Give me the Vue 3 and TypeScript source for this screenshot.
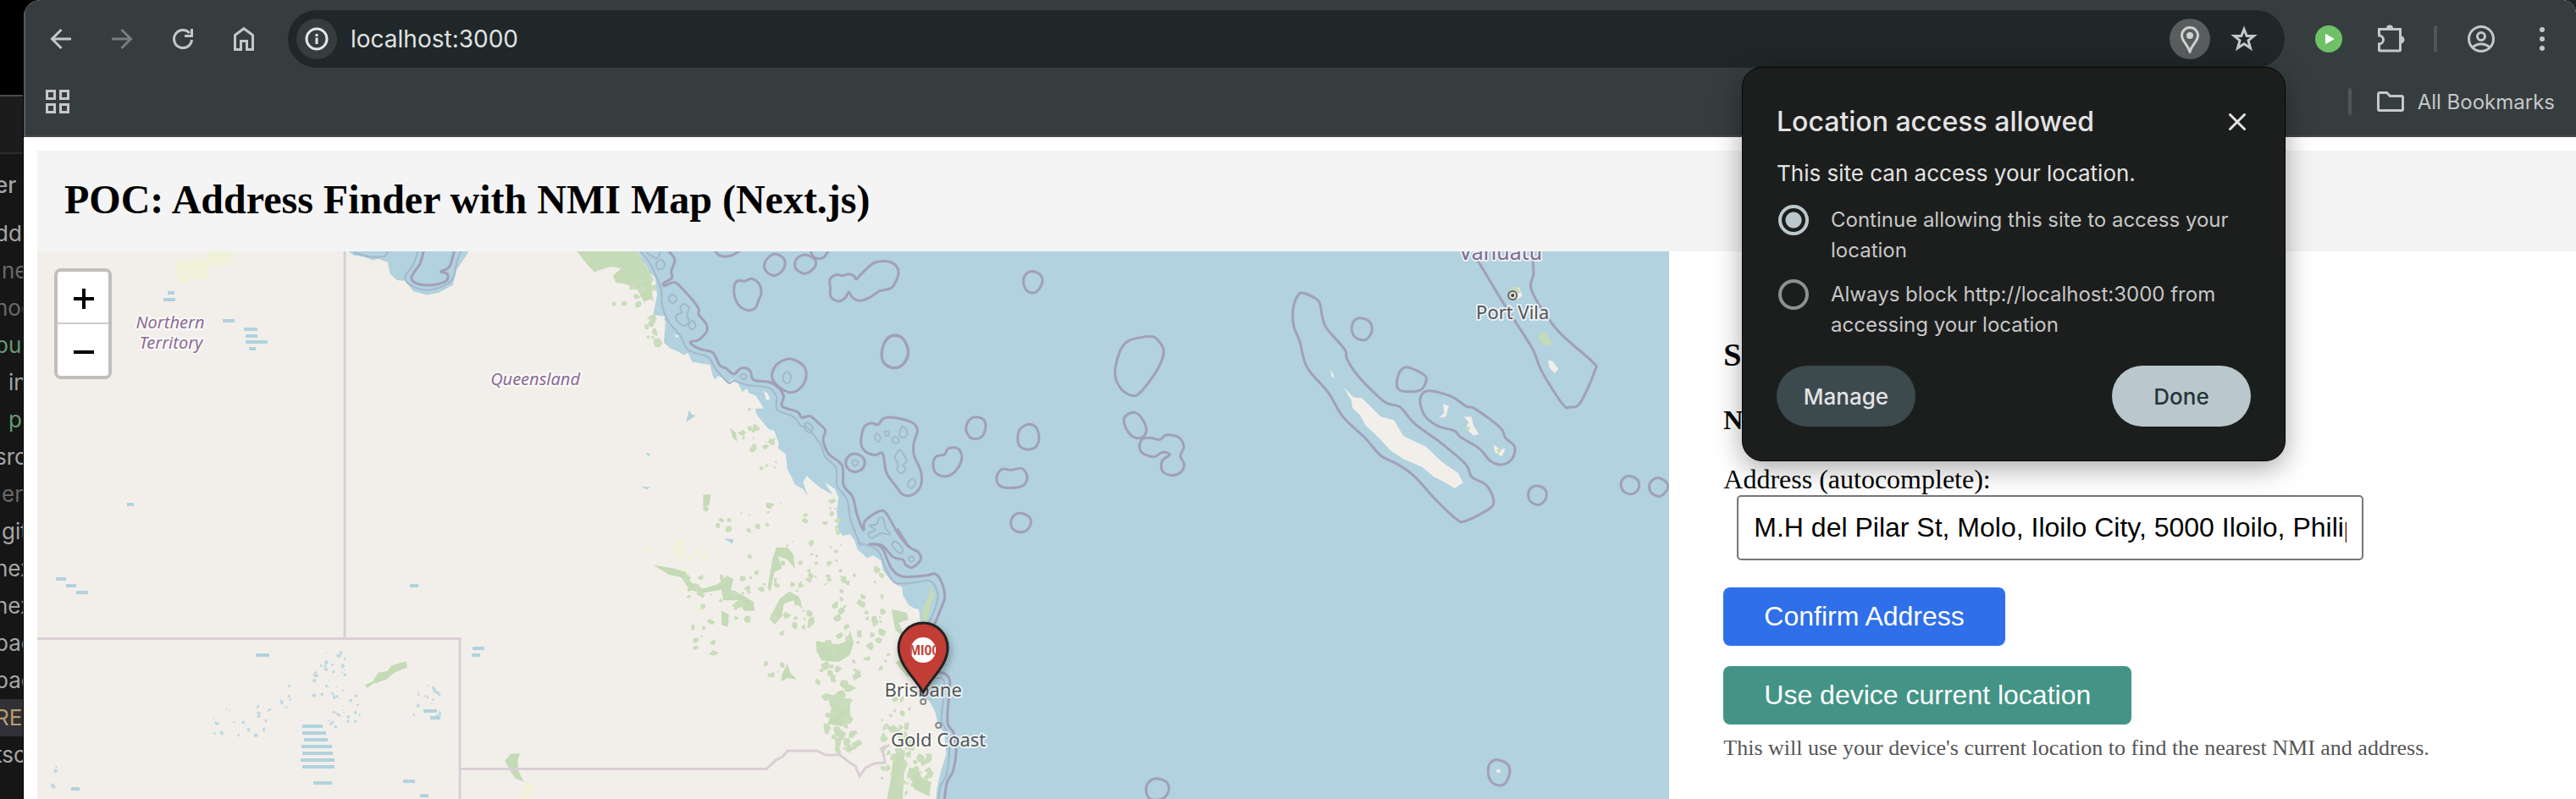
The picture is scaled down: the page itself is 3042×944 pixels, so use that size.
<script setup lang="ts">
import { ref } from 'vue'

type Point = [number, number]

interface TreeRow {
  name: string
  tone: string
}

const address = ref('M.H del Pilar St, Molo, Iloilo City, 5000 Iloilo, Philippines')
const permission = ref('allow')

const treeRows: TreeRow[] = [
  { name: 'ddr', tone: 'plain flush' },
  { name: 'ne', tone: 'faded' },
  { name: 'noc', tone: 'faded flush' },
  { name: 'pub', tone: 'added flush' },
  { name: 'in', tone: 'plain nested' },
  { name: 'p', tone: 'added nested' },
  { name: 'src', tone: 'plain flush' },
  { name: 'en', tone: 'faded' },
  { name: 'git', tone: 'plain' },
  { name: 'nex', tone: 'plain flush' },
  { name: 'nex', tone: 'plain flush' },
  { name: 'pac', tone: 'plain flush' },
  { name: 'pac', tone: 'plain flush' },
  { name: 'RE', tone: 'changed flush' },
  { name: 'tsc', tone: 'plain flush' },
]

/* Each map sheet keeps its own grid; these place its points on the shared canvas. */
const sheet = (x0: number, y0: number, sx: number, sy: number) => (list: number[]): Point[] => {
  const out: Point[] = []
  for (let i = 0; i < list.length; i += 2) {
    out.push([Math.round((x0 + list[i] * sx) * 10) / 10, Math.round((y0 + list[i + 1] * sy) * 10) / 10])
  }
  return out
}
const west = sheet(0, 290, 0.6378, 0.4171)
const coast = sheet(700, 290, 0.4464, 0.4171)
const islands = sheet(1300, 290, 0.4464, 0.4171)
const reef = sheet(750, 290, 0.3333, 0.3333)

const line = (pts: Point[], closed = false): string => 'M' + pts.map((p) => p.join(' ')).join('L') + (closed ? 'Z' : '')

const curve = (pts: Point[], closed = true): string => {
  const n = pts.length
  const at = (i: number): Point => (closed ? pts[(i + n) % n] : pts[Math.max(0, Math.min(n - 1, i))])
  let d = `M${pts[0][0]} ${pts[0][1]}`
  const last = closed ? n : n - 1
  for (let i = 0; i < last; i++) {
    const [a, b, c, e] = [at(i - 1), at(i), at(i + 1), at(i + 2)]
    const c1 = [b[0] + (c[0] - a[0]) / 6, b[1] + (c[1] - a[1]) / 6].map((v) => v.toFixed(1))
    const c2 = [c[0] - (e[0] - b[0]) / 6, c[1] - (e[1] - b[1]) / 6].map((v) => v.toFixed(1))
    d += `C${c1.join(' ')} ${c2.join(' ')} ${c[0]} ${c[1]}`
  }
  return closed ? d + 'Z' : d
}

const sea = line(coast([
  120, 17, 128, 40, 140, 55, 152, 78, 165, 92, 170, 140, 166, 160, 160, 195, 180, 200, 192, 215, 188, 275, 205, 292, 225, 300,
  240, 310, 252, 305, 262, 330, 285, 334, 310, 338, 318, 372, 325, 380, 330, 370, 345, 375, 358, 392, 368, 378, 385, 392, 395, 415,
  408, 405, 412, 418, 430, 425, 440, 440, 452, 462, 430, 462, 432, 475, 445, 495, 465, 520, 480, 525, 492, 560, 490, 575, 510, 590,
  515, 635, 525, 655, 535, 678, 556, 690, 568, 710, 556, 670, 566, 652, 578, 665, 600, 685, 635, 706, 612, 670, 640, 690, 650, 714,
  645, 750, 650, 810, 662, 822, 680, 818, 692, 835, 700, 862, 712, 872, 725, 885, 742, 878, 762, 892, 768, 920, 785, 945, 800, 960,
  818, 968, 820, 990, 835, 1018, 850, 1028, 862, 1030, 866, 1060, 862, 1100, 880, 1180, 892, 1215, 880, 1250, 870, 1275, 890, 1290,
  905, 1320, 912, 1350, 930, 1385, 935, 1440, 920, 1490, 910, 1540, 908, 1568, 2850, 1568, 2850, 17,
]), true)

const gulf = line(west([
  645, 17, 655, 28, 672, 32, 690, 42, 700, 38, 718, 48, 722, 80, 735, 98, 750, 100, 756, 112, 765, 130, 790, 140, 812, 134, 838, 112,
  845, 70, 858, 40, 868, 17,
]), true)

const maritime: string[] = [
  curve(reef([
    120, 22, 140, 50, 128, 90, 130, 115, 102, 133, 104, 143, 130, 132, 150, 136, 200, 190, 225, 225, 225, 245, 250, 275, 255, 300, 240, 322,
    222, 336, 195, 342, 208, 356, 240, 370, 275, 380, 300, 425, 322, 436, 345, 455, 355, 453, 370, 438, 390, 434, 408, 446, 415, 472,
    432, 480, 480, 486, 512, 508, 526, 535, 521, 570, 575, 590, 590, 610, 620, 605, 650, 630, 673, 655, 666, 690, 685, 738, 733, 780,
    738, 850, 770, 890, 785, 950, 808, 1008, 815, 975, 865, 942, 890, 950, 930, 1020, 968, 1068,
  ]), false),
  curve(coast([805, 802, 836, 853, 860, 868, 867, 890, 845, 912, 828, 905, 820, 890, 795, 883, 765, 850, 732, 846, 752, 848, 768, 862, 790, 915,
    820, 938, 880, 935, 905, 930, 921, 950, 931, 993, 922, 1025, 903, 1075]), false),
  curve(coast([900, 1212, 925, 1210, 943, 1228, 943, 1258, 938, 1350, 954, 1380, 961, 1430, 953, 1488, 937, 1520, 930, 1568]), false),
  curve(west([785, 10, 778, 50, 762, 90, 772, 108, 800, 112, 826, 100, 828, 80, 816, 74, 832, 60, 842, 10]), false),
  curve(reef([280, 15, 300, 36, 340, 36, 372, 18]), false),
  curve(reef([620, 15, 634, 42, 665, 44, 684, 20]), false),
  curve(reef([492, 30, 525, 45, 530, 72, 510, 100, 485, 106, 460, 85, 462, 55])),
  curve(reef([598, 33, 632, 45, 640, 68, 620, 92, 595, 99, 568, 80, 570, 50])),
  curve(reef([365, 125, 390, 126, 412, 118, 438, 135, 447, 165, 437, 195, 425, 222, 402, 230, 370, 215, 352, 180, 351, 142])),
  curve(reef([690, 120, 712, 104, 735, 107, 758, 101, 775, 108, 783, 120, 800, 102, 850, 60, 908, 60, 933, 95, 910, 148, 865, 162, 830, 185,
    795, 196, 770, 185, 757, 165, 745, 185, 720, 198, 693, 182, 691, 150])),
  curve(reef([918, 318, 950, 332, 968, 380, 950, 420, 915, 434, 882, 417, 873, 382, 888, 338])),
  curve(reef([552, 402, 595, 425, 606, 460, 590, 500, 552, 521, 510, 502, 485, 470, 492, 435, 515, 412])),
  curve(reef([860, 635, 880, 613, 915, 610, 980, 627, 1000, 655, 987, 700, 988, 745, 1012, 800, 1012, 850, 985, 882, 950, 884, 925, 855,
    890, 805, 877, 738, 850, 743, 815, 730, 800, 700, 810, 645, 835, 630])),
  curve(reef([779, 738, 805, 750, 813, 770, 803, 793, 779, 803, 755, 792, 746, 770, 755, 748])),
  curve(coast([900, 620, 908, 598, 930, 592, 940, 575, 965, 575, 976, 600, 962, 635, 935, 654, 908, 645])),
  curve(coast([1013, 486, 1035, 495, 1038, 520, 1025, 545, 1000, 545, 987, 522, 995, 495])),
  curve(coast([1150, 507, 1172, 515, 1180, 545, 1170, 572, 1145, 577, 1126, 562, 1127, 525])),
  curve(coast([1082, 634, 1105, 636, 1135, 632, 1149, 655, 1138, 680, 1102, 687, 1075, 680, 1068, 655])),
  curve(coast([1132, 758, 1155, 770, 1157, 792, 1142, 810, 1118, 809, 1106, 790, 1112, 767])),
  curve(coast([1163, 73, 1185, 85, 1188, 108, 1172, 132, 1150, 130, 1139, 105, 1145, 82])),
  curve(coast([797, 255, 822, 266, 834, 300, 822, 335, 797, 347, 770, 332, 765, 300, 776, 266])),
  curve(islands([75, 269, 130, 258, 150, 268, 166, 300, 150, 350, 105, 415, 82, 425, 52, 405, 37, 362, 50, 300])),
  curve(islands([85, 473, 105, 485, 120, 520, 110, 543, 85, 542, 65, 515, 62, 487])),
  curve(islands([110, 548, 130, 545, 155, 550, 172, 537, 205, 543, 219, 570, 210, 596, 220, 620, 210, 643, 185, 651, 162, 638, 162, 610, 182, 592,
    162, 586, 140, 599, 110, 588, 102, 568])),
  curve(islands([535, 135, 575, 157, 585, 200, 597, 235, 645, 295, 650, 320, 680, 370, 750, 443, 790, 457, 830, 505, 900, 560, 965, 620, 980, 655,
    1020, 680, 1038, 720, 1028, 745, 965, 780, 940, 775, 885, 720, 830, 655, 785, 620, 740, 595, 700, 547, 640, 485, 600, 415, 545, 345, 525, 270,
    510, 230, 508, 180, 520, 143])),
  curve(islands([690, 206, 712, 218, 716, 245, 700, 267, 675, 262, 663, 238, 670, 212])),
  curve(islands([812, 345, 858, 370, 856, 395, 840, 412, 795, 412, 782, 395, 790, 358])),
  curve(islands([865, 412, 925, 427, 965, 455, 990, 463, 1055, 515, 1070, 545, 1094, 570, 1087, 605, 1060, 621, 1030, 610, 1000, 575, 950, 542,
    935, 525, 890, 511, 855, 480, 844, 435])),
  curve(islands([995, 40, 1068, 170, 1140, 290, 1165, 355, 1220, 448, 1240, 458, 1268, 445, 1306, 355, 1300, 330, 1205, 237, 1140, 130, 1144, 80, 1142, 35]), false),
  curve(islands([1154, 681, 1175, 692, 1177, 716, 1160, 734, 1138, 727, 1130, 705, 1138, 686])),
  curve(islands([1399, 653, 1420, 665, 1422, 688, 1405, 704, 1383, 697, 1375, 675, 1383, 658])),
  curve(islands([1474, 658, 1495, 670, 1498, 690, 1480, 710, 1458, 703, 1450, 683, 1458, 665])),
  curve(islands([1048, 1457, 1074, 1468, 1081, 1492, 1070, 1522, 1050, 1529, 1030, 1515, 1024, 1488, 1030, 1465])),
  curve(islands([150, 1510, 175, 1522, 178, 1548, 160, 1568, 130, 1568, 119, 1542, 128, 1518])),
]

const inshore: string[] = [
  curve(reef([20, 22, 50, 60, 75, 110, 92, 155, 96, 215, 118, 270, 160, 320, 190, 372, 258, 395, 285, 437, 330, 487, 350, 480, 400, 495, 470, 503,
    500, 535, 503, 582, 560, 607, 588, 640, 610, 645, 658, 708, 672, 748, 712, 790, 715, 852, 750, 900, 765, 980, 800, 1065]), false),
  curve(coast([700, 842, 752, 862, 775, 915, 800, 955, 850, 955, 892, 950, 912, 985, 908, 1020, 888, 1072]), false),
  curve(coast([905, 1225, 928, 1232, 926, 1290, 922, 1345, 938, 1380, 943, 1430, 935, 1500, 920, 1530, 914, 1568]), false),
  curve(west([775, 10, 765, 55, 750, 88, 758, 110, 785, 126, 815, 118, 838, 95, 846, 45, 855, 10]), false),
  curve(west([655, 20, 685, 32, 712, 30, 718, 12]), false),
  curve(reef([40, 25, 75, 45, 90, 22]), false),
  curve(reef([88, 50, 104, 62, 100, 80, 82, 84, 74, 66])),
  curve(reef([134, 175, 148, 188, 138, 203, 121, 197, 122, 180])),
  curve(reef([175, 208, 191, 222, 184, 245, 190, 272, 172, 284, 147, 265, 148, 245, 165, 238, 160, 218])),
  curve(reef([203, 267, 214, 283, 204, 298, 188, 284])),
  curve(reef([384, 455, 395, 464, 384, 475, 373, 464])),
  curve(reef([537, 448, 552, 463, 545, 487, 528, 483, 524, 463])),
  curve(reef([612, 628, 629, 645, 620, 664, 602, 652, 602, 633])),
  curve(reef([779, 760, 790, 770, 779, 782, 768, 770])),
  curve(reef([855, 666, 869, 680, 862, 697, 849, 683])),
  line(reef([885, 659, 899, 661, 898, 674, 885, 673]), true),
  curve(reef([946, 641, 963, 660, 955, 680, 937, 673])),
  curve(reef([921, 677, 935, 690, 924, 702, 909, 690])),
  curve(reef([937, 724, 950, 740, 962, 765, 948, 780, 958, 790, 943, 808, 927, 793, 932, 775, 920, 750])),
  curve(reef([982, 826, 993, 843, 978, 860, 964, 846])),
  curve(reef([865, 965, 880, 970, 886, 1000, 903, 1025, 870, 1020, 840, 1037, 825, 1022, 850, 1008, 830, 992, 856, 988])),
  curve(coast([800, 838, 820, 860, 812, 872, 792, 850])),
  curve(coast([843, 880, 850, 888, 843, 896, 835, 888])),
]

const reefLand = [
  line(islands([640, 400, 668, 430, 690, 432, 740, 485, 775, 495, 800, 540, 860, 570, 900, 612, 945, 645, 958, 672, 935, 688, 905, 668, 880, 655,
    850, 628, 800, 605, 765, 580, 735, 545, 700, 510, 685, 480, 665, 460, 662, 438]), true),
  line(islands([606, 350, 615, 365, 618, 378, 610, 370]), true),
  line(islands([960, 485, 980, 485, 985, 510, 1000, 535, 985, 538, 965, 518, 972, 500]), true),
  line(islands([1038, 563, 1055, 578, 1070, 575, 1060, 598, 1042, 585]), true),
  line(islands([905, 448, 920, 455, 912, 485, 893, 488, 908, 475]), true),
  line(islands([1183, 325, 1195, 328, 1210, 350, 1200, 362, 1185, 345]), true),
  line(islands([1085, 125, 1105, 118, 1115, 142, 1102, 152, 1090, 145]), true),
  line(islands([1046, 1484, 1056, 1484, 1056, 1493, 1046, 1493]), true),
  line(reef([75, 250, 105, 250, 100, 280, 86, 268]), true),
  line(reef([455, 515, 470, 525, 478, 545, 465, 548]), true),
  line(reef([138, 316, 156, 320, 148, 328]), true),
]

const woods = [
  line(west([1068, 17, 1180, 17, 1192, 50, 1205, 80, 1208, 150, 1192, 160, 1180, 125, 1160, 110, 1140, 105, 1135, 85, 1150, 65, 1130, 60, 1100, 75, 1085, 50]), true),
  line(coast([160, 905, 215, 915, 245, 925, 260, 955, 290, 972, 330, 960, 355, 935, 372, 945, 365, 975, 395, 990, 425, 1010, 428, 1035, 400, 1035, 385, 1005,
    345, 1005, 340, 975, 290, 985, 255, 975, 235, 940, 200, 932]), true),
  line(coast([485, 855, 515, 855, 530, 875, 535, 915, 515, 890, 490, 880, 500, 915, 480, 925, 470, 980, 462, 970, 475, 890]), true),
  line(coast([495, 1000, 520, 980, 545, 995, 555, 1030, 530, 1005, 505, 1015, 500, 1050, 480, 1075, 470, 1050]), true),
  line(coast([590, 1120, 615, 1125, 650, 1130, 672, 1120, 680, 1090, 690, 1125, 680, 1160, 650, 1180, 605, 1175, 592, 1150]), true),
  line(coast([340, 1035, 360, 1045, 358, 1080, 340, 1075]), true),
  line(coast([500, 1215, 515, 1185, 522, 1210, 540, 1230, 515, 1225, 498, 1235]), true),
  line(coast([625, 1290, 655, 1280, 680, 1300, 680, 1340, 660, 1362, 620, 1355, 635, 1320]), true),
  line(coast([795, 1440, 825, 1430, 820, 1568, 778, 1568, 790, 1500]), true),
  line(coast([835, 1480, 860, 1480, 870, 1510, 895, 1520, 890, 1560, 850, 1540]), true),
  line(coast([790, 1030, 830, 1040, 835, 1060, 810, 1068, 825, 1110, 800, 1090]), true),
  line(coast([800, 1180, 820, 1170, 850, 1225, 830, 1220]), true),
  line(coast([893, 960, 903, 990, 892, 1030, 883, 1070, 868, 1070, 875, 1020, 890, 990]), true),
  line(coast([362, 515, 378, 530, 382, 556, 370, 545]), true),
  line(coast([292, 705, 312, 705, 308, 735, 292, 740]), true),
  line(coast([458, 728, 480, 732, 470, 746, 458, 742]), true),
  line(west([675, 1245, 690, 1235, 700, 1210, 718, 1205, 725, 1190, 752, 1178, 754, 1195, 730, 1210, 715, 1230, 690, 1242, 680, 1254]), true),
  line(west([935, 1460, 945, 1440, 962, 1438, 958, 1460, 960, 1490, 970, 1520, 955, 1510, 945, 1490]), true),
  line(islands([1158, 248, 1172, 245, 1186, 265, 1194, 283, 1180, 284, 1158, 268]), true),
  line(islands([1080, 120, 1098, 115, 1110, 132, 1095, 140]), true),
  line(islands([1045, 577, 1062, 576, 1052, 590]), true),
  line(islands([960, 513, 978, 515, 972, 524]), true),
]

const lakes = [
  line(west([1270, 500, 1276, 465, 1280, 478, 1288, 482, 1278, 492]), true),
  line(west([1196, 587, 1204, 590, 1200, 598]), true),
  line(west([1340, 830, 1358, 832, 1356, 845, 1348, 838]), true),
  line(west([1186, 684, 1204, 684, 1198, 691]), true),
]

/* Repeatable scatter of small patches for scrub and salt pans. */
let seed = 7
const rand = (): number => {
  seed = (seed * 16807) % 2147483647
  return seed / 2147483647
}
const scatter = (x: number, y: number, w: number, h: number, count: number, size: number): string => {
  let d = ''
  for (let i = 0; i < count; i++) {
    const cx = x + rand() * w
    const cy = y + rand() * h
    const r = size * (0.4 + rand())
    const corners: Point[] = []
    for (let k = 0; k < 6; k++) {
      const a = (k / 6) * Math.PI * 2
      const q = r * (0.5 + rand() * 0.8)
      corners.push([Math.round((cx + Math.cos(a) * q) * 10) / 10, Math.round((cy + Math.sin(a) * q) * 10) / 10])
    }
    d += line(corners, true)
  }
  return d
}
const scrub = [
  scatter(725, 326, 50, 36, 12, 4),
  scatter(763, 376, 14, 34, 10, 4),
  scatter(874, 480, 26, 40, 10, 3),
  scatter(884, 518, 34, 40, 10, 3),
  scatter(820, 590, 160, 40, 18, 3),
  scatter(880, 640, 120, 60, 34, 3),
  scatter(810, 680, 80, 60, 24, 4),
  scatter(970, 660, 80, 140, 50, 4),
  scatter(900, 700, 60, 50, 14, 4),
  scatter(815, 740, 30, 36, 8, 3),
  scatter(960, 790, 60, 30, 12, 4),
  scatter(975, 810, 32, 60, 26, 5),
  scatter(985, 860, 28, 40, 22, 4),
  scatter(1040, 820, 40, 110, 44, 4),
  scatter(1070, 890, 32, 50, 18, 4),
  scatter(900, 780, 30, 24, 6, 3),
  scatter(980, 590, 14, 40, 8, 3),
]
const pans = [
  scatter(370, 770, 40, 60, 34, 2),
  scatter(250, 835, 70, 34, 22, 2),
  scatter(380, 820, 45, 40, 20, 2),
  scatter(488, 810, 34, 36, 16, 2),
  scatter(330, 800, 14, 44, 8, 2),
  scatter(50, 905, 40, 24, 4, 3),
]
const meadows = [
  line(west([322, 42, 380, 38, 384, 18, 430, 17, 430, 55, 388, 58, 382, 92, 352, 95, 348, 108, 330, 105]), true),
  line(west([965, 1540, 975, 1520, 990, 1525, 985, 1550, 970, 1568, 964, 1568]), true),
  line(coast([220, 840, 235, 835, 240, 870, 225, 895, 218, 865]), true),
  line(coast([140, 852, 160, 860, 150, 880]), true),
  line(coast([912, 1290, 924, 1290, 920, 1320, 914, 1318]), true),
  line(coast([268, 1010, 292, 1020, 290, 1042, 275, 1035]), true),
  line(islands([998, 700, 1010, 710, 1003, 720]), true),
  line(islands([1234, 420, 1248, 420, 1250, 432, 1238, 434]), true),
  scatter(795, 640, 40, 60, 16, 3),
]

const dashes: number[][] = [
  [357, 858, 24], [357, 866, 28], [359, 874, 28], [356, 882, 36], [357, 890, 36], [355, 898, 40], [357, 906, 38], [370, 925, 22],
  [193, 354, 14], [198, 346, 8], [263, 379, 14], [288, 389, 16], [290, 397, 14], [290, 404, 26], [294, 412, 8],
  [558, 766, 14], [557, 774, 10], [302, 774, 16], [66, 684, 12], [78, 692, 12], [90, 700, 14], [484, 692, 10], [476, 923, 14],
  [496, 940, 10], [500, 840, 16], [508, 848, 12], [150, 596, 8], [84, 932, 10],
]
</script>

<template>
  <div class="desktop">
    <aside class="editor" aria-label="Explorer">
      <div class="editor-tabs"></div>
      <div class="editor-title">er</div>
      <ul class="tree">
        <li v-for="(row, i) in treeRows" :key="i" :class="row.tone">{{ row.name }}</li>
      </ul>
    </aside>

    <div class="browser">
      <header class="chrome">
        <div class="toolbar">
          <nav class="nav">
            <button type="button" aria-label="Back">
              <svg width="32" height="32" viewBox="0 0 32 32"><path d="M28 16H6M16.500 5 5.500 16l11 11" class="stroke" /></svg>
            </button>
            <button type="button" aria-label="Forward" class="dim">
              <svg width="32" height="32" viewBox="0 0 32 32"><path d="M4 16h22M15.500 5l11 11-11 11" class="stroke" /></svg>
            </button>
            <button type="button" aria-label="Reload">
              <svg width="32" height="32" viewBox="0 0 32 32">
                <path d="M26.500 17A10.500 10.500 0 1 1 23.800 9" class="stroke" />
                <path d="M28 4v10H18v-3h7V4z" fill="currentColor" />
              </svg>
            </button>
            <button type="button" aria-label="Home">
              <svg width="32" height="32" viewBox="0 0 32 32"><path d="M5.500 28.500v-17L16 3.700l10.500 7.800v17h-7v-10h-7v10z" class="stroke" /></svg>
            </button>
          </nav>
          <div class="omnibox">
            <button type="button" class="round info" aria-label="Site information">
              <svg width="28" height="28" viewBox="0 0 28 28">
                <circle cx="14" cy="14" r="12" class="stroke" />
                <path d="M12.500 12.500h3V20h-3zM12.500 8h3v3h-3z" fill="currentColor" />
              </svg>
            </button>
            <span class="url">localhost:3000</span>
            <button type="button" class="round pin" aria-label="Location permission">
              <svg width="24" height="34" viewBox="0 0 24 34">
                <path d="M12 32C9 23 2.500 19.500 2.500 13a9.500 9.500 0 0 1 19 0C21.500 19.500 15 23 12 32z" class="stroke" />
                <circle cx="12" cy="13" r="4" fill="currentColor" />
              </svg>
            </button>
            <button type="button" class="star" aria-label="Bookmark this page">
              <svg width="32" height="32" viewBox="0 0 32 32">
                <path d="M16 4.500l3.200 8h8.300l-6.500 5.300 2.500 9L16 21.700l-7.500 5.100 2.500-9-6.500-5.300h8.300z" class="stroke" />
              </svg>
            </button>
          </div>
          <div class="actions">
            <button type="button" aria-label="Play">
              <svg width="32" height="32" viewBox="0 0 32 32"><circle cx="16" cy="16" r="16" fill="#6fc067" /><path d="M12.500 10.500 22 16l-9.500 5.500z" fill="#fff" stroke="#fff" stroke-linejoin="round" /></svg>
            </button>
            <button type="button" aria-label="Extensions" class="puzzle">
              <svg width="34" height="34" viewBox="0 0 34 34">
                <path d="M3.500 5.500h25V30a1 1 0 0 1-1 1h-23a1 1 0 0 1-1-1v-7a5 5 0 0 0 0-10z" class="stroke" />
                <path d="M12 4.500a4 4 0 0 1 8 0zM29 13.500a4.500 4.500 0 0 1 0 9z" fill="currentColor" />
              </svg>
            </button>
            <span class="rule"></span>
            <button type="button" aria-label="Profile" class="profile">
              <svg width="32" height="32" viewBox="0 0 32 32">
                <circle cx="16" cy="16" r="14.500" class="stroke" />
                <circle cx="16" cy="13" r="4.500" class="stroke" />
                <path d="M6 26c5-5.500 15-5.500 20 0" class="stroke" />
              </svg>
            </button>
            <button type="button" aria-label="Menu" class="menu">
              <svg width="8" height="28" viewBox="0 0 8 28"><circle cx="4" cy="3" r="3" fill="currentColor" /><circle cx="4" cy="14" r="3" fill="currentColor" /><circle cx="4" cy="25" r="3" fill="currentColor" /></svg>
            </button>
          </div>
        </div>
        <div class="bookmarks">
          <button type="button" aria-label="Apps">
            <svg width="28" height="28" viewBox="0 0 28 28"><path d="M1.500 1.500h9v9h-9zM17.500 1.500h9v9h-9zM1.500 17.500h9v9h-9zM17.500 17.500h9v9h-9z" class="stroke" /></svg>
          </button>
          <span class="rule"></span>
          <button type="button" class="all-bookmarks">
            <svg width="32" height="24" viewBox="0 0 32 24"><path d="M3 1.500h8.500l4 4H29A1.500 1.500 0 0 1 30.500 7v14a1.500 1.500 0 0 1-1.500 1.500H3A1.500 1.500 0 0 1 1.500 21V3A1.500 1.500 0 0 1 3 1.500z" class="stroke" /></svg>
            All Bookmarks
          </button>
        </div>
      </header>

      <main class="page">
        <div class="banner"><h1>POC: Address Finder with NMI Map (Next.js)</h1></div>
        <div class="content">
          <section class="map" aria-label="Map">
            <svg class="tiles" viewBox="44 297 1927 647" preserveAspectRatio="xMinYMin slice">
              <defs>
                <clipPath id="badge"><circle cx="1090" cy="768" r="15" /></clipPath>
                <filter id="drop" x="-30%" y="-30%" width="160%" height="160%"><feDropShadow dx="2" dy="4" stdDeviation="5" flood-opacity="0.3" /></filter>
              </defs>
              <rect x="44" y="297" width="1927" height="647" fill="#f2efea" />
              <path v-for="(d, i) in meadows" :key="'m' + i" :d="d" fill="#eff2d8" />
              <path :d="sea" fill="#b1d2de" />
              <path :d="gulf" fill="#b1d2de" />
              <path v-for="(d, i) in reefLand" :key="'r' + i" :d="d" fill="#f2efea" />
              <path v-for="(d, i) in woods" :key="'w' + i" :d="d" fill="#c5dab6" />
              <path v-for="(d, i) in scrub" :key="'s' + i" :d="d" fill="#c9dcbb" />
              <path v-for="(d, i) in lakes" :key="'l' + i" :d="d" fill="#b1d2de" />
              <path v-for="(d, i) in pans" :key="'p' + i" :d="d" fill="#bfd9e2" />
              <path v-for="(s, i) in dashes" :key="'d' + i" :d="`M${s[0]} ${s[1]}h${s[2]}`" stroke="#b1d2de" stroke-width="4" />
              <g class="state">
                <path d="M407 297V754" />
                <path d="M44 754.500H543V944" />
                <path d="M543 908.500H905L916 898 924 894 930 887H965L975 892 992 892 1002 900 1010 905 1015 917 1022 907 1032 902 1045 901 1042 885 1050 880" />
              </g>
              <path v-for="(d, i) in inshore" :key="'i' + i" :d="d" class="inshore" />
              <path v-for="(d, i) in maritime" :key="'b' + i" :d="d" class="maritime" />
              <g class="region">
                <text x="201" y="388">Northern</text>
                <text x="202" y="412">Territory</text>
                <text x="632" y="455">Queensland</text>
              </g>
              <text class="country" x="1772" y="307">Vanuatu</text>
              <g class="city">
                <circle cx="1786" cy="349" r="5" fill="#e8e4dc" stroke="#666" stroke-width="2" />
                <circle cx="1786" cy="349" r="2" fill="#444" />
                <circle cx="1090" cy="829" r="3" fill="#fff" stroke="#888" stroke-width="2" />
                <circle cx="1108" cy="857" r="3" fill="#fff" stroke="#888" stroke-width="2" />
                <text x="1786" y="377">Port Vila</text>
                <text x="1090" y="823">Brisbane</text>
                <text x="1108" y="882">Gold Coast</text>
              </g>
              <path d="M1090 818C1080 800 1061 786 1061 765a29 29 0 0 1 58 0C1119 786 1100 800 1090 818z" fill="#c23e36" stroke="#222" stroke-width="3" filter="url(#drop)" />
              <circle cx="1090" cy="768" r="15" fill="#fff" />
              <text x="1090" y="774" class="marker" clip-path="url(#badge)">NMI001</text>
            </svg>
            <div class="zoom">
              <button type="button" aria-label="Zoom in"><svg width="26" height="26" viewBox="0 0 26 26"><path d="M1 13h24M13 1v24" stroke="#000" stroke-width="4" /></svg></button>
              <button type="button" aria-label="Zoom out"><svg width="26" height="26" viewBox="0 0 26 26"><path d="M1 13h24" stroke="#000" stroke-width="4" /></svg></button>
            </div>
          </section>
          <form class="panel" @submit.prevent>
            <h3>Selected Address</h3>
            <p class="nmi">NMI:</p>
            <label for="address">Address (autocomplete):</label>
            <input id="address" v-model="address" type="text" />
            <button type="submit" class="confirm">Confirm Address</button>
            <button type="button" class="locate">Use device current location</button>
            <p class="hint">This will use your device's current location to find the nearest NMI and address.</p>
          </form>
        </div>
      </main>

      <section class="popover" role="dialog" aria-labelledby="popover-title">
        <div class="popover-head">
          <h2 id="popover-title">Location access allowed</h2>
          <button type="button" aria-label="Close">
            <svg width="20" height="20" viewBox="0 0 20 20"><path d="M1.500 1.500l17 17M18.500 1.500l-17 17" class="stroke" stroke-linecap="round" /></svg>
          </button>
        </div>
        <p class="lead">This site can access your location.</p>
        <label class="choice">
          <input v-model="permission" type="radio" name="permission" value="allow" />
          <span>Continue allowing this site to access your location</span>
        </label>
        <label class="choice">
          <input v-model="permission" type="radio" name="permission" value="block" />
          <span>Always block http://localhost:3000 from accessing your location</span>
        </label>
        <div class="popover-actions">
          <button type="button" class="manage">Manage</button>
          <button type="button" class="done">Done</button>
        </div>
      </section>
    </div>
  </div>
</template>

<style>
body {
  margin: 0;
  background: #000;
}
</style>

<style scoped>
.desktop {
  display: flex;
  height: 100vh;
  overflow: hidden;
  background: linear-gradient(#1b2426, #1b2426) right top / 60px 60px no-repeat #000;
  font-family: Inter, "Liberation Sans", sans-serif;
}
button {
  border: 0;
  padding: 0;
  background: none;
  color: inherit;
  font: inherit;
  display: flex;
  align-items: center;
  justify-content: center;
}
h1, h2, h3, p, ul {
  margin: 0;
  padding: 0;
}
.stroke {
  fill: none;
  stroke: currentColor;
  stroke-width: 3;
}

.editor {
  flex: none;
  width: 27px;
  margin-top: 112px;
  border-top: 2px solid #4c4c4c;
  background: #161616;
  overflow: hidden;
  font-size: 26px;
  color: #a5a5a5;
}
.editor-tabs {
  height: 66px;
  border-bottom: 2px solid #2b2b2b;
  background: #1c1c1c;
}
.editor-title {
  height: 72px;
  line-height: 74px;
  text-indent: -6px;
  font-weight: 500;
}
.tree {
  list-style: none;
}
.tree li {
  height: 44px;
  line-height: 44px;
  padding-left: 2px;
  white-space: nowrap;
}
.tree .flush {
  padding-left: 0;
  text-indent: -6px;
}
.tree .nested {
  padding-left: 10px;
}
.faded {
  color: #696969;
}
.added {
  color: #639a72;
}
.changed {
  color: #b59b6e;
  background: #303036;
}

.browser {
  position: relative;
  flex: 1;
  min-width: 0;
  display: flex;
  flex-direction: column;
  margin-left: 1px;
  border-radius: 20px 16px 0 0;
  overflow: hidden;
  background: #fff;
}
.chrome {
  flex: none;
  border-left: 2px solid #55595b;
  border-bottom: 2px solid #4a4748;
  background: #363d3f;
  color: #c3c8ca;
}
.toolbar {
  display: flex;
  align-items: center;
  height: 68px;
  padding: 12px 36px 0 26px;
}
.nav {
  display: flex;
  gap: 40px;
}
.dim {
  color: #787d7e;
}
.omnibox {
  flex: 1;
  display: flex;
  align-items: center;
  height: 68px;
  margin: 0 36px;
  padding: 0 32px 0 10px;
  border-radius: 34px;
  background: #1f2729;
}
.round {
  width: 48px;
  height: 48px;
  border-radius: 50%;
}
.info {
  background: #363d3f;
  color: #e6e6e6;
}
.url {
  flex: 1;
  margin-left: 16px;
  font-size: 28px;
  color: #e0e2e2;
}
.pin {
  background: #585d5e;
  color: #d0d0d0;
}
.star {
  margin-left: 24px;
}
.actions {
  display: flex;
  align-items: center;
}
.puzzle {
  margin-left: 40px;
}
.rule {
  width: 4px;
  height: 32px;
  border-radius: 2px;
  background: #505759;
}
.actions .rule {
  margin-left: 34px;
}
.profile {
  margin-left: 36px;
}
.menu {
  margin-left: 52px;
}
.bookmarks {
  display: flex;
  align-items: center;
  height: 80px;
  padding: 0 25px 0 24px;
  color: #c7c7c7;
}
.bookmarks .rule {
  margin-left: auto;
}
.all-bookmarks {
  gap: 16px;
  margin-left: 30px;
  font-size: 24px;
}

.page {
  flex: 1;
  min-height: 0;
  display: flex;
  flex-direction: column;
  padding: 16px 0 0 16px;
  font-family: "Liberation Serif", serif;
  font-size: 32px;
  color: #000;
}
.banner {
  padding: 30px 32px 34px;
  background: #f4f4f4;
}
h1 {
  font-size: 48px;
  line-height: 55px;
}
.content {
  flex: 1;
  min-height: 0;
  display: grid;
  grid-template-columns: minmax(0, 9fr) minmax(0, 5fr);
}
.map {
  position: relative;
  overflow: hidden;
  background: #b1d2de;
}
.tiles {
  display: block;
  width: 100%;
  height: 100%;
}
.state {
  fill: none;
  stroke: #d9cfd5;
  stroke-width: 3;
}
.maritime {
  fill: none;
  stroke: #a29fb9;
  stroke-width: 3;
}
.inshore {
  fill: none;
  stroke: #a4b7ce;
  stroke-width: 2;
}
.region,
.country,
.city {
  font-family: "Noto Sans", sans-serif;
  text-anchor: middle;
  stroke-linejoin: round;
}
.region text,
.country,
.city text {
  paint-order: stroke;
  stroke: rgba(255, 255, 255, 0.7);
  stroke-width: 4px;
}
.region {
  font-size: 20px;
  font-style: italic;
  fill: #8c6b96;
}
.country {
  font-size: 25px;
  fill: #84698f;
}
.city {
  font-size: 22px;
  fill: #555;
}
.marker {
  font: bold 16px "Liberation Sans", sans-serif;
  text-anchor: middle;
  fill: #c23e36;
}
.zoom {
  position: absolute;
  left: 20px;
  top: 20px;
  border: 4px solid rgba(0, 0, 0, 0.2);
  border-radius: 8px;
  background-clip: padding-box;
}
.zoom button {
  width: 60px;
  height: 61px;
  padding: 4px 0 0 2px;
  background: #fff;
}
.zoom button:first-child {
  height: 62px;
  border-bottom: 2px solid #ccc;
  border-radius: 4px 4px 0 0;
}
.zoom button:last-child {
  border-radius: 0 0 4px 4px;
}

.panel {
  display: flex;
  flex-direction: column;
  align-items: flex-start;
  padding: 100px 64px 0;
}
h3 {
  font-size: 38px;
  line-height: 44px;
}
.nmi {
  margin: 37px 0 34px;
  line-height: 36px;
  font-weight: bold;
}
.panel label {
  line-height: 36px;
}
.panel input {
  box-sizing: border-box;
  width: 740px;
  height: 77px;
  margin: 1px 0 32px 16px;
  padding: 0 18px;
  border: 2px solid #767676;
  border-radius: 5px;
  background: #fff;
  font: 32px "Liberation Sans", sans-serif;
  color: #000;
}
.panel button {
  height: 69px;
  padding: 0 48px;
  border-radius: 8px;
  font-family: "Liberation Sans", sans-serif;
  color: #fff;
}
.confirm {
  background: #2f6fea;
}
.locate {
  margin-top: 24px;
  background: #439486;
}
.hint {
  margin-top: 13px;
  font-size: 26px;
  line-height: 30px;
  white-space: nowrap;
  color: #555;
}

.popover {
  position: absolute;
  top: 79px;
  right: 343px;
  box-sizing: border-box;
  width: 642px;
  padding: 44px 40px 40px;
  border: 1px solid #050505;
  border-radius: 24px;
  background: #1c1e1d;
  box-shadow: 0 8px 32px rgba(0, 0, 0, 0.35);
  color: #e3e3e3;
}
.popover-head {
  display: flex;
  justify-content: space-between;
  padding-right: 6px;
  color: #e3e3e3;
}
h2 {
  font-size: 32px;
  line-height: 40px;
  font-weight: 500;
}
.lead {
  margin: 21px 0 17px;
  font-size: 26px;
  line-height: 40px;
}
.choice {
  display: flex;
  gap: 26px;
  margin-bottom: 16px;
  padding-left: 2px;
  font-size: 24px;
  line-height: 36px;
  color: #c7c7c7;
}
.choice input {
  flex: none;
  appearance: none;
  box-sizing: border-box;
  width: 36px;
  height: 36px;
  margin: 0;
  border: 4px solid #8e918f;
  border-radius: 50%;
}
.choice input:checked {
  border-color: #bac8cd;
  background: radial-gradient(circle, #bac8cd 9px, transparent 10px);
}
.popover-actions {
  display: flex;
  justify-content: space-between;
  margin-top: 30px;
}
.popover-actions button {
  width: 164px;
  height: 72px;
  border-radius: 36px;
  font-size: 26px;
  font-weight: 500;
}
.manage {
  background: #3c494d;
  color: #e3e3e3;
}
.done {
  background: #bac8cd;
  color: #26343a;
}
</style>
